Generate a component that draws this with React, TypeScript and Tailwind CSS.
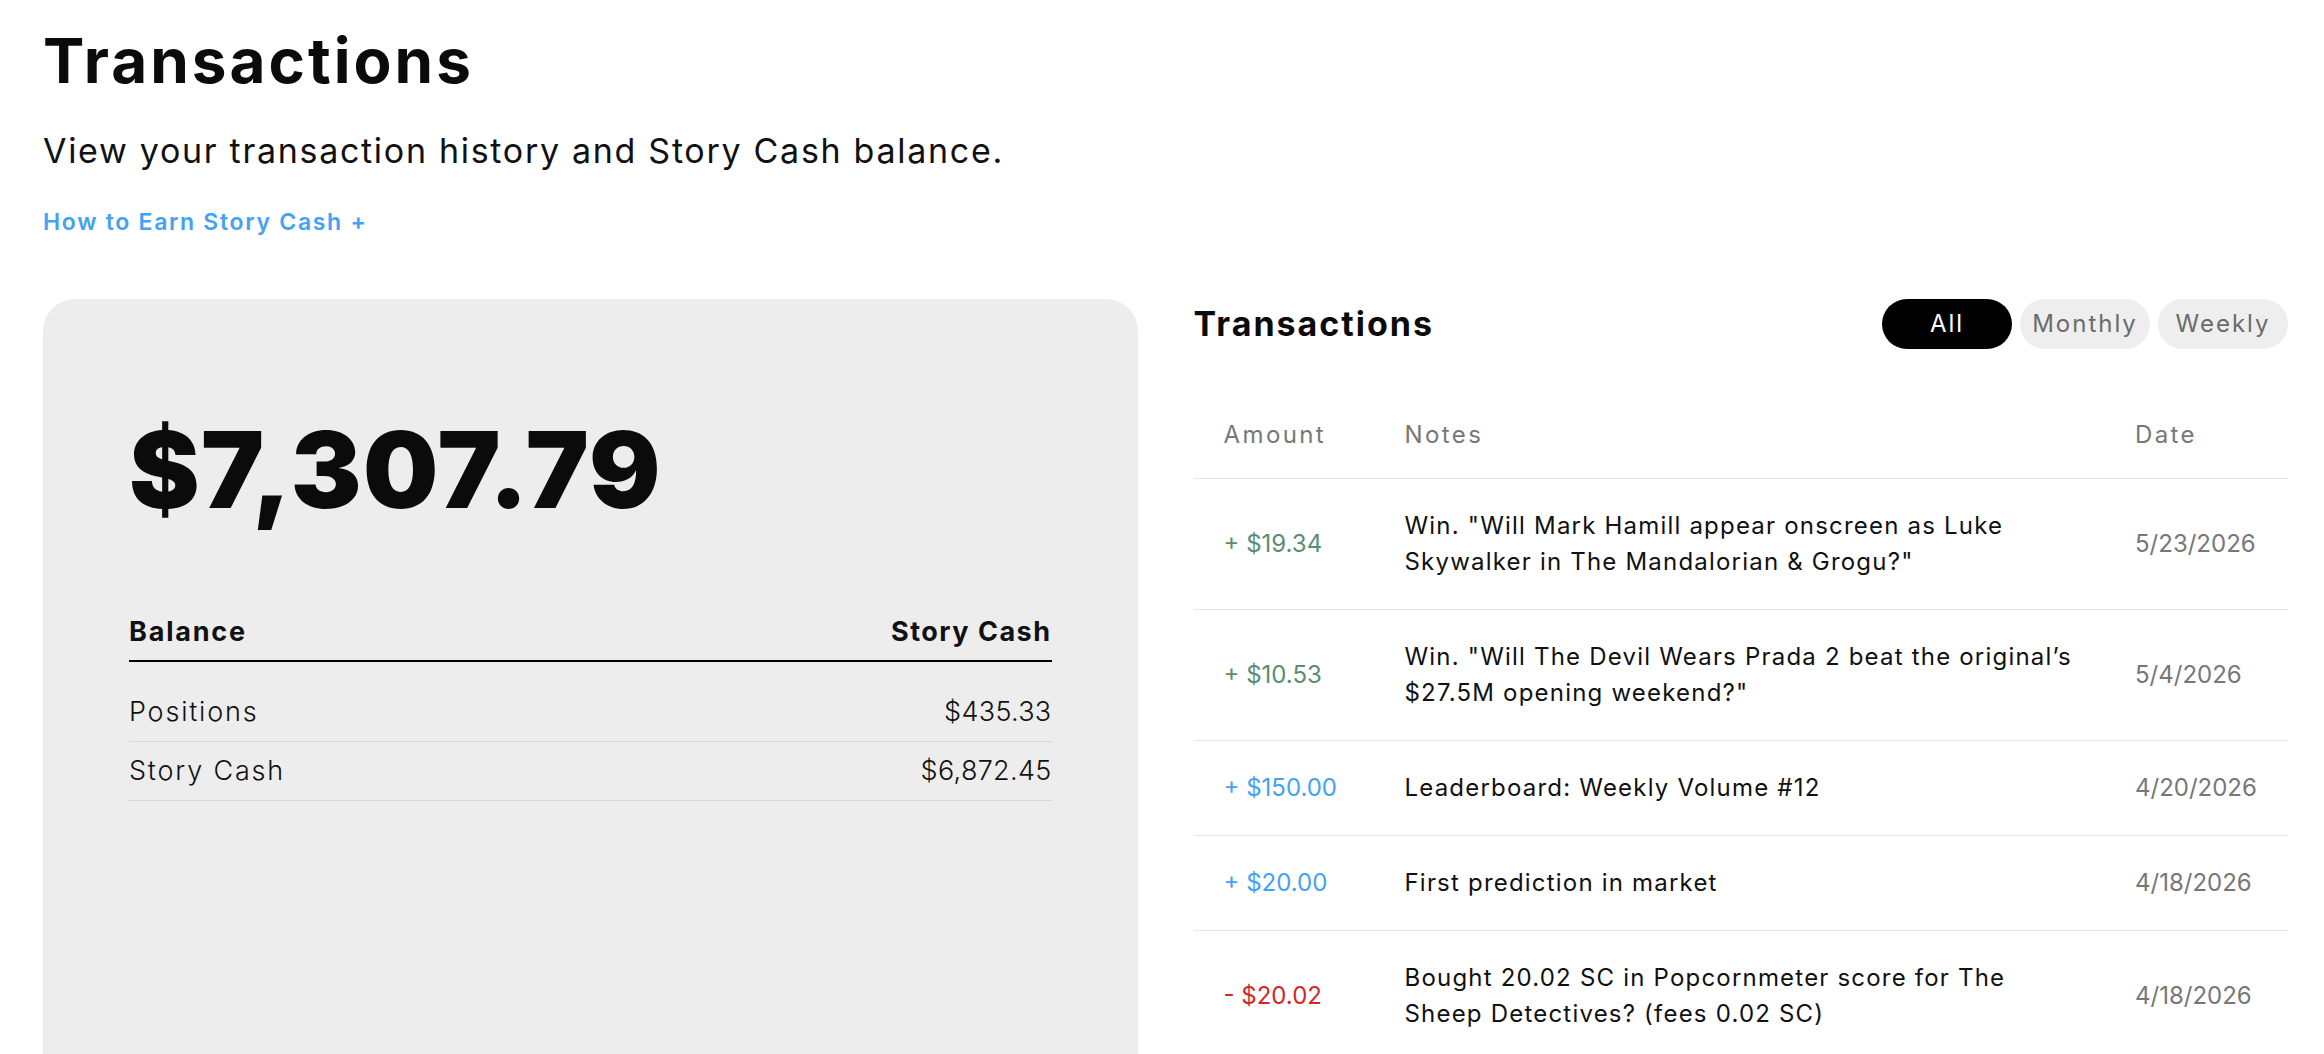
import { useState } from 'react'

type Tx = {
  amount: string
  tone: 'win' | 'bonus' | 'spend'
  note: string[]
  date: string
}

// notes are kept as display lines so long market titles break the same way every time
const transactions: Tx[] = [
  { amount: '+ $19.34', tone: 'win', note: ['Win. "Will Mark Hamill appear onscreen as Luke', 'Skywalker in The Mandalorian & Grogu?"'], date: '5/23/2026' },
  { amount: '+ $10.53', tone: 'win', note: ['Win. "Will The Devil Wears Prada 2 beat the original’s', '$27.5M opening weekend?"'], date: '5/4/2026' },
  { amount: '+ $150.00', tone: 'bonus', note: ['Leaderboard: Weekly Volume #12'], date: '4/20/2026' },
  { amount: '+ $20.00', tone: 'bonus', note: ['First prediction in market'], date: '4/18/2026' },
  { amount: '- $20.02', tone: 'spend', note: ['Bought 20.02 SC in Popcornmeter score for The', 'Sheep Detectives? (fees 0.02 SC)'], date: '4/18/2026' },
]

const toneClass = {
  win: 'text-[#5a8d74]',
  bonus: 'text-[#44a2f2]',
  spend: 'text-[#d42626]',
}

const filters = ['All', 'Monthly', 'Weekly']

function BalanceCard() {
  return (
    <div className="rounded-[32px] bg-[#ededed] px-[86px] pt-[118px] pb-[300px]">
      <div className="text-[106px] leading-none font-black text-[#0b0b0b] tracking-[1.3px]">$7,307.79</div>

      <table className="mt-[91px] w-full border-collapse text-[27px] text-[#111]">
        <thead>
          <tr className="border-b-2 border-black">
            <th className="pb-[10px] text-left font-bold leading-[36px] tracking-[1.8px]">Balance</th>
            <th className="pb-[10px] text-right font-bold leading-[36px] tracking-[1.5px]">Story Cash</th>
          </tr>
        </thead>
        <tbody>
          <tr className="h-[22px]" />
          <tr className="border-b border-[#d6d6d9]">
            <td className="py-[10px] leading-[38px] font-light tracking-[1.8px]">Positions</td>
            <td className="py-[10px] text-right leading-[38px] font-light tracking-[0.3px]">$435.33</td>
          </tr>
          <tr className="border-b border-[#d6d6d9]">
            <td className="py-[10px] leading-[38px] font-light tracking-[1.8px]">Story Cash</td>
            <td className="py-[10px] text-right leading-[38px] font-light tracking-[0.3px]">$6,872.45</td>
          </tr>
        </tbody>
      </table>
    </div>
  )
}

function TransactionList() {
  const [filter, setFilter] = useState('All')

  return (
    <div>
      <div className="flex h-[50px] items-center justify-between">
        <h2 className="text-[34px] font-bold leading-[40px] tracking-[2px] text-[#0b0b0b]">Transactions</h2>
        <div className="flex gap-[8px]">
          {filters.map((f) => (
            <button
              key={f}
              onClick={() => setFilter(f)}
              className={
                f === filter
                  ? 'h-[50px] w-[130px] rounded-full bg-black text-[24px] tracking-[2px] text-white'
                  : 'h-[50px] w-[130px] rounded-full bg-[#eeeeee] text-[24px] tracking-[2px] text-[#6b6b6b]'
              }
            >
              {f}
            </button>
          ))}
        </div>
      </div>

      <table className="mt-[47px] w-full border-collapse text-[24px]">
        <thead>
          <tr className="border-b border-[#e3e3e3] text-left text-[24px] tracking-[2.4px] text-[#777]">
            <th className="w-[181px] pb-[27px] pl-[30px] pt-[23px] font-normal leading-[32px]">Amount</th>
            <th className="pl-[30px] pr-[20px] pb-[27px] pt-[23px] font-normal leading-[32px]">Notes</th>
            <th className="w-[183px] pb-[27px] pl-[30px] pt-[23px] font-normal leading-[32px]">Date</th>
          </tr>
        </thead>
        <tbody>
          {transactions.map((t, i) => (
            <tr key={i} className="border-b border-[#e3e3e3]">
              <td className={`pl-[30px] align-middle leading-[36px] ${toneClass[t.tone]}`}>{t.amount}</td>
              <td className="pl-[30px] pr-[20px] py-[29px] align-middle leading-[36px] tracking-[1.2px] text-[#111]">
                {t.note.map((line) => (
                  <span key={line} className="block whitespace-nowrap">{line}</span>
                ))}
              </td>
              <td className="pl-[30px] align-middle leading-[36px] text-[#777]">{t.date}</td>
            </tr>
          ))}
        </tbody>
      </table>
    </div>
  )
}

export default function App() {
  return (
    <div className="min-h-screen bg-white pl-[43px] pr-[36px] pt-[30px]" style={{ fontFamily: 'Inter, "Liberation Sans", sans-serif' }}>
      <h1 className="text-[62px] font-bold leading-[62px] tracking-[3px] text-[#0b0b0b]">Transactions</h1>
      <p className="mt-[39px] text-[34px] leading-[40px] tracking-[1.7px] text-[#111]">View your transaction history and Story Cash balance.</p>
      <a href="#" className="mt-[37px] block w-fit text-[23px] font-semibold leading-[28px] tracking-[1.7px] text-[#44a2f2]">
        How to Earn Story Cash +
      </a>

      <div className="mt-[63px] grid grid-cols-2 gap-[56px]">
        <BalanceCard />
        <TransactionList />
      </div>
    </div>
  )
}
